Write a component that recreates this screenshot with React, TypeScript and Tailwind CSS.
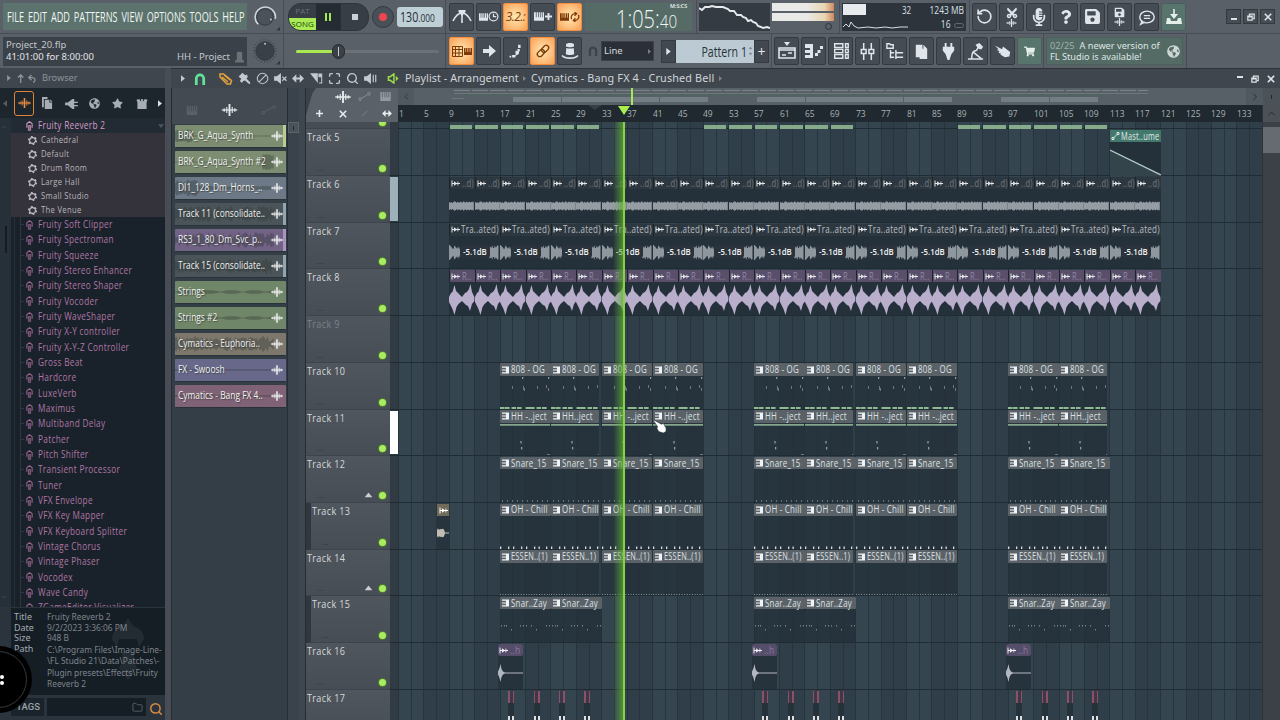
import type { ReactNode } from "react";
import clsx from "clsx";
import {
  FaCut,
  FaGlobeAmericas,
  FaMicrophoneAlt,
  FaQuestion,
  FaSave,
  FaShoppingCart,
  FaStar,
} from "react-icons/fa";
import {
  ChevronDown,
  ChevronLeft,
  ChevronRight,
  ChevronUp,
  Folder,
  Maximize,
  RotateCcw,
  Search,
} from "lucide-react";

const BAR = 6.351;
const barX = (bar: number) => 0.5 + (bar - 1) * BAR;

const range = (from: number, to: number, step: number) => {
  const out: number[] = [];
  for (let i = from; i < to; i += step) out.push(i);
  return out;
};

/* ---------- small shared pieces ---------- */

// Narrow UI lettering: regular glyphs squeezed horizontally.
function Cond({ children, className = "scale-x-[0.84]" }: { children: ReactNode; className?: string }) {
  return <span className={clsx("inline-block origin-left whitespace-pre", className)}>{children}</span>;
}

function Wave({ className }: { className?: string }) {
  return (
    <svg viewBox="0 0 18 14" className={className} fill="none" stroke="currentColor">
      <path strokeWidth="1.500" d="M0 7h18" />
      <path strokeWidth="1.300" d="M2.800 5v4M15.200 5v4M5.800 3.500v7M12.200 3.500v7" />
      <path strokeWidth="2.200" d="M9 0v14" />
    </svg>
  );
}

function Keys({ className }: { className?: string }) {
  return (
    <svg viewBox="0 0 14 12" className={className} fill="currentColor">
      <path d="M0 0h2.600v7h1V0h2.100v7h1V0h1.600v7h1V0H11v7h1V0h2v12H0z" />
    </svg>
  );
}

function Tri({ className }: { className?: string }) {
  return (
    <svg viewBox="0 0 5 8" className={clsx("shrink-0", className ?? "h-[7px] w-[5px]")} fill="currentColor">
      <path d="M0 0l5 4-5 4z" />
    </svg>
  );
}

function DoubleArrow({ className }: { className?: string }) {
  return (
    <svg viewBox="0 0 14 10" className={className} fill="currentColor">
      <path d="M0 5l5-5v3.800h4V0l5 5-5 5V6.200H5V10z" />
    </svg>
  );
}

function Speaker({ mute, className }: { mute?: boolean; className?: string }) {
  return (
    <svg viewBox="0 0 14 12" className={className} fill="currentColor" stroke="currentColor">
      <path stroke="none" d="M0 3.500h3L7.500 0v12L3 8.500H0z" />
      {mute ? (
        <path strokeWidth="1.400" d="M9 4l4.500 4.500M13.500 4L9 8.500" />
      ) : (
        <path strokeWidth="1.300" d="M10 2v8M12.700 2v8" />
      )}
    </svg>
  );
}

function Magnet({ className }: { className?: string }) {
  return (
    <svg viewBox="0 0 12 13" className={className} fill="none" stroke="currentColor" strokeWidth="3">
      <path d="M2 13V6a4 4 0 0 1 8 0v7" />
    </svg>
  );
}

function Restore({ className }: { className?: string }) {
  return (
    <svg viewBox="0 0 10 10" className={className} fill="none" stroke="currentColor" strokeWidth="1.500">
      <path d="M1 4h5.500v5H1zM3 3V1.500h6V7H7.500M1 4.800h5.500" />
    </svg>
  );
}

function Cross({ className }: { className?: string }) {
  return (
    <svg viewBox="0 0 10 10" className={className} fill="none" stroke="currentColor" strokeWidth="2">
      <path d="M1 1l8 8M9 1L1 9" />
    </svg>
  );
}

function ToolButton({ tone = "dark", children }: { tone?: "dark" | "hot" | "teal"; children: ReactNode }) {
  return (
    <button
      type="button"
      className={clsx(
        "flex h-[28px] w-[25px] shrink-0 items-center justify-center rounded-[2px] border",
        tone === "dark" && "border-[#343a41] bg-[#454c54] text-[#dfe5ea]",
        tone === "hot" && "border-[#f58d3a] bg-radial from-[#ffe9b4] to-[#f9a052] text-[#7c3a08]",
        tone === "teal" && "border-[#4a5f5c] bg-[#58756d] text-[#e6eeea]",
      )}
    >
      {children}
    </button>
  );
}

const Sep = () => <div className="h-full w-px shrink-0 bg-[#474d54]" />;

function Svg({ d, fill, w = 20 }: { d?: string; fill?: string; w?: number }) {
  return (
    <svg viewBox="0 0 20 20" width={w} height={w} fill="none" stroke="currentColor" strokeWidth="1.600">
      {d && <path d={d} />}
      {fill && <path d={fill} fill="currentColor" stroke="none" />}
    </svg>
  );
}

/* ---------- top toolbar ---------- */

function Knob({ dim }: { dim?: boolean }) {
  return (
    <svg viewBox="0 0 34 34" className="h-[34px] w-[33px]" fill="none">
      {!dim && <path d="M8.500 24.500A10.400 10.400 0 1 1 26 19" stroke="#cfd5d9" strokeWidth="1.600" />}
      {dim && <circle cx="15.500" cy="17" r="11.500" stroke="#3c4248" strokeWidth="1.200" strokeDasharray="1 2" />}
      <circle cx="15.500" cy="17" r={dim ? 9.5 : 8.5} fill={dim ? "#3a4047" : "#4b525a"} stroke="#32383e" />
      <circle cx={dim ? 15.5 : 21.5} cy={dim ? 9.5 : 19.5} r="1" fill="#bfc6cb" />
      <path d="M31 27v4h-4z" fill="#30363b" />
    </svg>
  );
}

function TopRow() {
  return (
    <div className="flex h-[34px] items-center border-b border-[#474d54]">
      <nav className="ml-[3px] flex h-[27px] w-[244px] shrink-0 items-center bg-[#5b736c] pl-[4px] font-['Open_Sans'] text-[14.500px] text-[#f1f5f3]">
        <div className="flex w-[378px] shrink-0 origin-left scale-x-[0.628] justify-between whitespace-nowrap">
          <span>FILE</span>
          <span>EDIT</span>
          <span>ADD</span>
          <span>PATTERNS</span>
          <span>VIEW</span>
          <span>OPTIONS</span>
          <span>TOOLS</span>
          <span>HELP</span>
        </div>
      </nav>
      <div className="ml-[3px] w-[33px] shrink-0">
        <Knob />
      </div>
      <Sep />
      <div className="ml-[4px] flex h-[28px] w-[81px] shrink-0 overflow-hidden rounded-[13px] border border-[#2e343a] bg-[#383e46]">
        <div className="flex w-[27px] flex-col text-center font-['Open_Sans'] text-[8px] leading-[14px]">
          <span className="text-[#6b727a]">PAT</span>
          <span className="h-[13px] rounded-bl-[9px] bg-[#a9ec56] leading-[12px] text-[#24400d]">SONG</span>
        </div>
        <div className="flex w-[25px] items-center justify-center gap-[2px] border-r border-[#2b3036] bg-[#252b32]">
          <span className="h-[8px] w-[2px] bg-[#a4e84d]" />
          <span className="h-[8px] w-[2px] bg-[#a4e84d]" />
        </div>
        <div className="flex flex-1 items-center justify-center">
          <span className="size-[6px] bg-[#cbd0d5]" />
        </div>
      </div>
      <div className="ml-[3px] flex size-[22px] shrink-0 items-center justify-center rounded-full border border-[#343a40] bg-[#4a5058]">
        <span className="size-[8px] rounded-full bg-[#ee4550]" />
      </div>
      <div className="ml-[3px] flex h-[20px] w-[46px] shrink-0 items-center rounded-[3px] bg-[#bfcfd6] pl-[3px] font-['Open_Sans'] text-[#27323a]">
        <Cond className="w-[38px] scale-x-[0.76] text-[14px]">
          130<span className="text-[11px]">.000</span>
        </Cond>
      </div>
      <div className="ml-[2px] h-full">
        <Sep />
      </div>
      <div className="ml-[3px] flex gap-[2px]">
        <ToolButton>
          <Svg d="M1 14C4 8 7 6 10 6s6 2 9 8M10 3v13" fill="M6.500 3h7v2L10 9 6.500 5z" />
        </ToolButton>
        <ToolButton>
          <div className="flex items-center">
            <Keys className="h-[8px] w-[9px]" />
            <svg viewBox="0 0 12 12" className="size-[11px]" fill="none" stroke="currentColor" strokeWidth="1.300">
              <circle cx="6" cy="6" r="4.800" />
              <path d="M6 3v3.200h3" />
            </svg>
          </div>
        </ToolButton>
        <ToolButton tone="hot">
          <span className="font-['Open_Sans'] text-[12px] tracking-tighter italic">3.2.:</span>
        </ToolButton>
        <ToolButton>
          <div className="flex items-center gap-px">
            <Keys className="h-[9px] w-[10px]" />
            <svg viewBox="0 0 8 8" className="size-[7px]" stroke="currentColor" strokeWidth="2.200">
              <path d="M4 0v8M0 4h8" />
            </svg>
          </div>
        </ToolButton>
        <ToolButton tone="hot">
          <div className="flex items-center gap-px">
            <Keys className="h-[8px] w-[9px]" />
            <svg viewBox="0 0 12 12" className="size-[10px]" fill="none" stroke="currentColor" strokeWidth="1.500">
              <path d="M2 8.500A4.500 4.500 0 0 1 7 2M5.500 0L8 2 5.500 4.500M10 3.500A4.500 4.500 0 0 1 5 10M6.500 7.500L4 10l2.500 2" />
            </svg>
          </div>
        </ToolButton>
      </div>
      <div className="ml-[3px] flex h-[28px] w-[107px] shrink-0 bg-[#566b66] pl-[31px] font-['Open_Sans'] text-[#eff6f3]">
        <Cond className="mt-[6px] h-[19px] w-[53px] shrink-0 scale-x-[0.8] text-[25px] leading-[19px] font-light">
          1:05:<span className="text-[19px]">40</span>
        </Cond>
        <span className="-ml-px origin-right scale-x-90 text-[6px] leading-[6px] font-semibold">M:S:CS</span>
      </div>
      <div className="ml-[4px] h-full">
        <Sep />
      </div>
      <div className="ml-[2px] h-[28px] w-[71px] shrink-0 bg-[#343b43]">
        <svg viewBox="0 0 71 28" className="h-full w-full" fill="none" stroke="#e6eaed" strokeWidth="1.900">
          <path d="M0 5l3 2 3-3 4 0 3-1 4 1 3 0 4 0 5 2 2 2 4 0 3 4 4 0 2 2 3 1 2 3 3-1 2 2 3 1 2 3 3 1 2 1 4-1 3 1 2 1" />
        </svg>
      </div>
      <div className="ml-[2px] flex h-[28px] w-[62px] shrink-0 flex-col gap-[2px]">
        <span className="h-[8px] bg-linear-to-r from-[#e9e9e8] from-55% via-[#e8d6b0] via-85% to-[#cd8863]" />
        <span className="h-[8px] bg-linear-to-r from-[#e9e9e8] from-55% via-[#e8d6b0] via-85% to-[#cd8863]" />
        <span className="mr-[2px] size-[7px] self-end rounded-full border border-[#2d3338]" />
      </div>
      <div className="ml-[5px] h-full">
        <Sep />
      </div>
      <div className="relative ml-[2px] flex h-[28px] w-[124px] shrink-0 bg-[#2d343c] font-['Open_Sans'] text-[10px] leading-[14px] text-[#dce1e5]">
        <div className="w-[74px]">
          <div className="flex h-[14px] items-center">
            <span className="ml-px h-[11px] w-[23px] bg-[#e7ebee]" />
            <Cond className="ml-[36px] scale-x-[0.8]">32</Cond>
          </div>
          <svg viewBox="0 0 66 14" className="h-[14px] w-[66px]" fill="none" stroke="#d9dee2" strokeWidth="1">
            <path d="M1 10l3-3 3 3 2-5 3 4 4 2 10-1 8 1 9-1 7 1 8-1 8 0" />
          </svg>
        </div>
        <div className="flex flex-1 flex-col items-end pr-[2px]">
          <span className="origin-right scale-x-[0.84]">1243 MB</span>
          <span className="mr-[14px] origin-right scale-x-[0.84]">16</span>
        </div>
        <span className="absolute right-[2px] bottom-[3px] h-[5px] w-[10px] rounded-full border-[1.500px] border-[#636a70]" />
      </div>
      <div className="ml-[3px] h-full">
        <Sep />
      </div>
      <div className="ml-[2px] flex gap-[2px]">
        <ToolButton>
          <RotateCcw className="size-[17px]" strokeWidth={2.300} />
        </ToolButton>
        <ToolButton>
          <div className="flex flex-col items-center">
            <FaCut className="size-[12px] -rotate-90" />
            <Wave className="h-[8px] w-[11px]" />
          </div>
        </ToolButton>
        <ToolButton>
          <FaMicrophoneAlt className="size-[18px]" />
        </ToolButton>
        <ToolButton>
          <FaQuestion className="size-[14px]" />
        </ToolButton>
        <ToolButton>
          <FaSave className="size-[17px]" />
        </ToolButton>
        <ToolButton>
          <div className="flex flex-col items-center">
            <FaSave className="size-[11px]" />
            <Wave className="h-[8px] w-[11px]" />
          </div>
        </ToolButton>
        <ToolButton>
          <Svg
            d="M6 15.500C3.500 14.500 2 12.500 2 10c0-3.700 3.600-6.500 8-6.500s8 2.800 8 6.500-3.600 6.500-8 6.500c-1 0-2 0-3-.5l-4 2 1.500-3.500M6.500 8.500h7M6.500 11.500h7"
            w={18}
          />
        </ToolButton>
        <ToolButton tone="teal">
          <Svg d="M10 2v6" fill="M6 7h8l-4 5zM3 11h3l1 3h6l1-3h3l1 6H2z" />
        </ToolButton>
      </div>
      <div className="ml-[40px] flex gap-[2px] text-[#dfe3e6]">
        <span className="flex h-[15px] w-[15px] items-center justify-center border border-[#33393f] bg-[#464d54]">
          <span className="mt-[5px] h-[2px] w-[6px] bg-current" />
        </span>
        <span className="flex h-[15px] w-[15px] items-center justify-center border border-[#33393f] bg-[#464d54]">
          <Restore className="size-[8px]" />
        </span>
        <span className="flex h-[15px] w-[15px] items-center justify-center border border-[#33393f] bg-[#464d54]">
          <Cross className="size-[8px]" />
        </span>
      </div>
    </div>
  );
}

function SecondRow() {
  return (
    <div className="flex h-[34px] items-center">
      <div className="ml-[3px] flex h-[29px] w-[244px] shrink-0 flex-col bg-[#3b4149] pl-[3px] font-['Noto_Sans'] text-[9.500px] leading-[12px] text-[#c3c8cc]">
        <span className="mt-[2px]">Project_20.flp</span>
        <div className="flex items-center justify-between pr-[3px]">
          <span className="text-[#e2e6e9]">41:01:00 for 8:00:00</span>
          <span className="flex items-center gap-[5px]">
            HH - Project
            <svg viewBox="0 0 10 12" className="h-[12px] w-[9px]" fill="#6a7177">
              <path d="M2 1c0-1.200 6-1.200 6 0v8l2 1v2H0v-2l2-1z" />
            </svg>
          </span>
        </div>
      </div>
      <div className="ml-[3px] w-[33px] shrink-0">
        <Knob dim />
      </div>
      <Sep />
      <div className="relative ml-[12px] h-[3px] w-[143px] shrink-0 rounded bg-[#6b7177]">
        <div className="h-[3px] w-[43px] rounded bg-[#a9e84f]" />
        <div className="absolute -top-[6px] left-[36px] flex h-[15px] w-[13px] items-center justify-center rounded-full border border-[#23282d] bg-[#3b4147]">
          <span className="h-[9px] w-px bg-[#c2c8cc]" />
        </div>
      </div>
      <div className="ml-[6px] h-full">
        <Sep />
      </div>
      <div className="ml-[3px] flex gap-[2px]">
        <ToolButton tone="hot">
          <div className="flex items-center gap-px">
            <svg viewBox="0 0 11 11" className="size-[11px]" fill="none" stroke="currentColor">
              <path d="M.5.500h10v10H.5zM3.500 0v11M7 0v11M0 3.500h11M0 7h11" />
            </svg>
            <Keys className="h-[11px] w-[8px]" />
          </div>
        </ToolButton>
        <ToolButton>
          <Svg fill="M4 8h6V4l7 6-7 6v-4H4z" />
        </ToolButton>
        <ToolButton>
          <Svg fill="M13 2h3v4h-3zM12 7h3v3h-2zM10 9h4v4l-4 2zM6 14h4v3H6zM3 15h2v2H3z" w={17} />
        </ToolButton>
        <ToolButton tone="hot">
          <svg viewBox="0 0 16 16" className="size-[16px]" fill="none" stroke="currentColor" strokeWidth="1.300">
            <g transform="rotate(-45 8 8)">
              <rect x="1" y="5.500" width="8" height="5" rx="2.500" />
              <rect x="7" y="5.500" width="8" height="5" rx="2.500" />
            </g>
          </svg>
        </ToolButton>
        <ToolButton>
          <Svg
            d="M2 14.500c3 3.500 13 3.500 16 0"
            fill="M6 3.500c0-2 8-2 8 0V5.500c-2 1-6 1-8 0zM6.300 7c2 .8 5.400.8 7.400 0l.5 6c-2 1.300-6.400 1.300-8.400 0z"
          />
        </ToolButton>
      </div>
      <div className="ml-[4px] flex w-[14px] shrink-0 justify-center">
        <Magnet className="h-[10px] w-[10px] text-[#3d444a]" />
      </div>
      <div className="ml-px flex h-[20px] w-[53px] shrink-0 items-center justify-between border border-[#3c424a] bg-[#2b3038] px-[2px] font-['Noto_Sans'] text-[9.500px] text-[#d6dade]">
        Line
        <Tri className="h-[5px] w-[3px] text-[#7a8086]" />
      </div>
      <div className="ml-[7px] flex h-[23px] w-[108px] shrink-0 bg-[#41484f] font-['Open_Sans']">
        <span className="flex w-[15px] items-center justify-center border border-[#353b41] text-[#e5e9ec]">
          <Tri />
        </span>
        <span className="flex w-[78px] items-center justify-end bg-[#bccbd3] text-[14px] text-[#27323a]">
          <span className="origin-right scale-x-[0.76]">Pattern 1</span>
          <span className="mx-[2px] flex flex-col gap-[2px] text-[#7b8990]">
            <Tri className="h-[4px] w-[3px] -rotate-90" />
            <Tri className="h-[4px] w-[3px] rotate-90" />
          </span>
        </span>
        <span className="flex w-[15px] items-center justify-center border border-[#353b41] text-[14px] text-[#e5e9ec]">+</span>
      </div>
      <div className="ml-[2px] h-full">
        <Sep />
      </div>
      <div className="ml-[2px] flex gap-[2px]">
        <ToolButton>
          <Svg d="M2 7h16v10H2zM2 9h16M5 14h4M11 12h4" fill="M7 1h6l-3 4z" />
        </ToolButton>
        <ToolButton>
          <Svg fill="M1 3h8v14H1v-3h5v-2H1V9h5V7H1zM11 12h3v3h-3zM13.500 9h3v3h-3zM16 5h3v3h-3z" />
        </ToolButton>
        <ToolButton>
          <Svg d="M3 2h9v4H3zM3 8h9v4H3zM3 14h9v4H3zM15 2h3v4h-3zM15 8h3v4h-3zM15 14h3v4h-3z" w={18} />
        </ToolButton>
        <ToolButton>
          <Svg d="M6 1v6M6 13v6M14 1v6M14 13v6M3.500 8h5v4h-5zM11.500 8h5v4h-5z" w={19} />
        </ToolButton>
        <ToolButton>
          <Svg d="M1 7V2h3l1 1h3v4zM5 9v9M5 12h4M5 17h4M11 9v6M11 12h8M11 15v4M11 17h8" w={18} />
        </ToolButton>
        <ToolButton>
          <Svg fill="M4 3h7v4h5v11H8v-2H4zM12 3l4 4h-4z" w={19} />
        </ToolButton>
        <ToolButton>
          <Svg fill="M6 1h2v4h4V1h2v4h2v4l-3 4-2 6H9l-2-6-3-4V5h2z" w={19} />
        </ToolButton>
        <ToolButton>
          <Svg d="M2 18h16M6 17c0-5 2-8 5-8M8 11l8 6.500M11 9l2-4" fill="M10 3l4-2 4 4-2 3-3-1z" w={19} />
        </ToolButton>
        <ToolButton>
          <Svg fill="M1 4l8 4 1-3 8 6-1 5-5 1-5-3 1-1-3-1 1-2-3-1 2-1z" w={18} />
        </ToolButton>
        <ToolButton tone="teal">
          <FaShoppingCart className="size-[11px]" />
        </ToolButton>
      </div>
      <div className="ml-[1px] h-full">
        <Sep />
      </div>
      <div className="ml-[2px] flex h-[28px] w-[137px] shrink-0 items-center justify-between border border-[#4b5f5b] bg-[#536a65] pr-[2px] pl-[3px] font-['Noto_Sans'] text-[9.200px] leading-[11.500px] text-[#dfe7e4]">
        <p className="whitespace-nowrap">
          <span className="mr-[5px] text-[#9fb0ab]">02/25</span>A newer version of
          <br />
          FL Studio is available!
        </p>
        <FaGlobeAmericas className="size-[13px] shrink-0 text-[#cdd6d3]" />
      </div>
      <div className="ml-[3px] h-full">
        <Sep />
      </div>
    </div>
  );
}

/* ---------- browser ---------- */

const presets = ["Cathedral", "Default", "Drum Room", "Large Hall", "Small Studio", "The Venue"];

const plugins = [
  "Fruity Soft Clipper",
  "Fruity Spectroman",
  "Fruity Squeeze",
  "Fruity Stereo Enhancer",
  "Fruity Stereo Shaper",
  "Fruity Vocoder",
  "Fruity WaveShaper",
  "Fruity X-Y controller",
  "Fruity X-Y-Z Controller",
  "Gross Beat",
  "Hardcore",
  "LuxeVerb",
  "Maximus",
  "Multiband Delay",
  "Patcher",
  "Pitch Shifter",
  "Transient Processor",
  "Tuner",
  "VFX Envelope",
  "VFX Key Mapper",
  "VFX Keyboard Splitter",
  "Vintage Chorus",
  "Vintage Phaser",
  "Vocodex",
  "Wave Candy",
  "ZGameEditor Visualizer",
];

function PluginIcon() {
  return (
    <svg viewBox="0 0 8 11" className="h-[10px] w-[7px] shrink-0" fill="none" stroke="currentColor" strokeWidth="1.200">
      <path d="M1 7.500V3l1.500-1.500h3L7 3v4.500M3 .6h2" />
      <path d="M2.700 5h2.600v5.500H2.700z" fill="currentColor" fillOpacity="0.5" strokeWidth="0.800" />
    </svg>
  );
}

function Gear() {
  return (
    <svg viewBox="0 0 10 10" className="size-[9px] shrink-0" fill="none" stroke="#c3c0c6">
      <circle cx="5" cy="5" r="3.200" strokeWidth="1.200" />
      <circle cx="5" cy="5" r="4.300" strokeWidth="1.500" strokeDasharray="2 2.500" />
    </svg>
  );
}

function Browser() {
  return (
    <aside className="flex w-[165px] shrink-0 flex-col font-['Open_Sans']">
      <div className="flex h-[20px] items-center gap-[6px] bg-[#40464d] pl-[7px] text-[#8d9398]">
        <Tri className="h-[6px] w-[4px]" />
        <svg viewBox="0 0 22 10" className="h-[9px] w-[20px]" fill="none" stroke="currentColor" strokeWidth="1.500">
          <path d="M4 10V1M1 4l3-3 3 3M18 9.500c3-2 2-5.500-1-5.500h-4M16 1l-3 3 3 3" />
        </svg>
        <span className="-ml-px font-['Noto_Sans'] text-[9.200px]">Browser</span>
      </div>
      <div className="flex h-[30px] items-center bg-[#1d262d] text-[#a7adb2]">
        <Tri className="ml-[3px] h-[7px] w-[4px] rotate-180 text-[#555d63]" />
        <span className="ml-[7px] flex h-[25px] w-[20px] items-center justify-center rounded-[3px] border border-[#e0843c] text-[#ec8f44]">
          <Wave className="h-[10px] w-[13px]" />
        </span>
        <div className="flex flex-1 items-center justify-between pr-[3px] pl-[8px]">
          <svg viewBox="0 0 12 13" className="h-[12px] w-[11px]" fill="currentColor">
            <path d="M0 0h6v2H2v9H0zM3 3h5v3h3v7H3zM9 2.500L11.500 5H9z" />
          </svg>
          <svg viewBox="0 0 14 12" className="ml-[2px] h-[11px] w-[13px]" fill="currentColor">
            <path d="M0 5h3l5-4h2v3h4v1.500h-4v2h4V9h-4v3H8L3 8H0z" />
          </svg>
          <FaGlobeAmericas className="size-[11px]" />
          <FaStar className="ml-[2px] size-[11px]" />
          <svg viewBox="0 0 12 12" className="ml-[2px] h-[11px] w-[12px]" fill="currentColor">
            <path d="M0 2l3-1 2 3V1h2v3l2-3 3 1-1 3v7H1V5z" />
          </svg>
          <Tri className="h-[7px] w-[4px] text-[#dadfe2]" />
        </div>
      </div>
      <div className="flex h-[489px]">
        <div className="relative flex w-[11px] flex-col justify-between bg-[#263038] pt-[5px] pb-[6px] text-[#47525a]">
          <ChevronUp className="size-[8px]" />
          <ChevronDown className="size-[8px]" />
          <span className="absolute top-[108px] left-[5px] h-[27px] w-[2px] bg-[#141b21]" />
        </div>
        <div className="flex-1 overflow-hidden bg-[#19222a]">
          <div className="flex h-[15px] items-center bg-[#222b33] pr-[2px] pl-[15px] text-[10px] font-medium text-[#d59bcb]">
            <PluginIcon />
            <Cond className="ml-[5px] scale-x-[0.82] tracking-[0.4px]">Fruity Reeverb 2</Cond>
            <Tri className="ml-auto h-[6px] w-[4px] rotate-90 text-[#4d565d]" />
          </div>
          <div className="bg-[#34323a] text-[9.800px] text-[#b8b6bd]">
            {presets.map((p) => (
              <div key={p} className="flex h-[14px] items-center pl-[17px]">
                <Gear />
                <Cond className="ml-[4px] scale-x-[0.78] tracking-[0.4px]">{p}</Cond>
              </div>
            ))}
          </div>
          <div className="ml-[3px] border-l border-[#252f37] text-[10px] font-medium text-[#b076a6]">
            <div className="ml-[5px] border-l border-[#2e3740]">
              {plugins.map((p) => (
                <div key={p} className="flex h-[15.340px] items-center">
                  <span className="h-px w-[3px] bg-[#2e3740]" />
                  <span className="ml-[2px] text-[#9a6591]">
                    <PluginIcon />
                  </span>
                  <Cond className="ml-[5px] scale-x-[0.82] tracking-[0.4px]">{p}</Cond>
                </div>
              ))}
            </div>
          </div>
        </div>
      </div>
      <div className="flex flex-1 flex-col bg-[#2b343c] pl-[11px]">
        <div className="relative mt-px h-[87px] bg-[#151d25] pt-[4px] pl-[3px] font-['Noto_Sans'] text-[9px] leading-[10.700px] text-[#7e858c]">
          <svg viewBox="0 0 40 62" className="absolute top-[10px] left-[97px] h-[62px] w-[40px]" fill="#232b33">
            <path d="M20 0l5 8c7 2 11 7 11 13l-5 8-2-8H11l-2 8-5-8C4 15 8 10 15 8zM14 34h12v10l3 6-9 12-9-12 3-6z" />
          </svg>
          <div className="relative flex whitespace-nowrap">
            <div className="flex w-[33px] shrink-0 flex-col text-[#a5abb1]">
              <span>Title</span>
              <span>Date</span>
              <span>Size</span>
              <span>Path</span>
            </div>
            <div className="flex w-[118px] shrink-0 origin-left scale-x-[0.93] flex-col">
              <span>Fruity Reeverb 2</span>
              <span>9/2/2023 3:36:06 PM</span>
              <span>948 B</span>
              <span className="leading-[11.300px]">
                C:\Program Files\Image-Line-
                <br />
                \FL Studio 21\Data\Patches\-
                <br />
                Plugin presets\Effects\Fruity
                <br />
                Reeverb 2
              </span>
            </div>
          </div>
        </div>
        <div className="mt-[3px] flex h-[18px] items-center">
          <span className="flex h-full w-[33px] items-center justify-end bg-[#1a232b] pr-[4px] font-['Roboto'] text-[9.500px] font-medium text-[#9ba2a8]">
            TAGS
          </span>
          <span className="ml-[3px] flex h-full w-[99px] items-center justify-end bg-[#151d25] pr-[3px] text-[#5b636a]">
            <Folder className="size-[11px]" />
          </span>
          <Search className="mt-[3px] ml-[3px] size-[14px] text-[#dc8a45]" strokeWidth={2.500} />
        </div>
      </div>
    </aside>
  );
}

/* ---------- clip picker ---------- */

const pickerClips = [
  { name: "BRK_G_Aqua_Synth", tone: "bg-[#7d8d71]", edge: "bg-[#b9cc91]" },
  { name: "BRK_G_Aqua_Synth #2", tone: "bg-[#7d8d71]", edge: "" },
  { name: "DI1_128_Dm_Horns_..", tone: "bg-[#6d7987]", edge: "" },
  { name: "Track 11 (consolidate..", tone: "bg-[#4b5459]", edge: "bg-[#91a5ac]" },
  { name: "RS3_1_80_Dm_Svc_p..", tone: "bg-[#716286]", edge: "bg-[#a893c1]" },
  { name: "Track 15 (consolidate..", tone: "bg-[#4b5459]", edge: "bg-[#91a5ac]" },
  { name: "Strings", tone: "bg-[#708668]", edge: "" },
  { name: "Strings #2", tone: "bg-[#708668]", edge: "" },
  { name: "Cymatics - Euphoria..", tone: "bg-[#7e776c]", edge: "" },
  { name: "FX - Swoosh", tone: "bg-[#68688a]", edge: "" },
  { name: "Cymatics - Bang FX 4..", tone: "bg-[#7f6275]", edge: "" },
];

// Filled envelope mirrored round the middle line.
function envelope(width: number, mid: number, step: number, amp: (x: number) => number) {
  const xs = range(0, width + 0.01, step);
  const top = xs.map((x) => `${x.toFixed(1)} ${(mid - amp(x)).toFixed(1)}`);
  const bottom = xs.map((x) => `${x.toFixed(1)} ${(mid + amp(x)).toFixed(1)}`).reverse();
  return `M${top.join("L")}L${bottom.join("L")}Z`;
}

const noise = (n: number) => Math.abs(Math.sin(n * 12.9898) * 43758.5453) % 1;

function Picker() {
  return (
    <section className="flex w-[128px] shrink-0 border-l border-[#252d34] bg-[#343e47]">
      <div className="w-[116px]">
        <div className="flex h-[36px] items-center justify-around bg-[#434a52] pt-[8px] pl-[2px] text-[#5a6168]">
          <Keys className="h-[9px] w-[12px]" />
          <Wave className="h-[12px] w-[17px] text-[#e3e8eb]" />
          <svg viewBox="0 0 16 10" className="h-[10px] w-[15px]" fill="none" stroke="currentColor">
            <circle cx="2" cy="8" r="1.500" />
            <path d="M3.500 7l9-5" />
            <circle cx="14" cy="2" r="1.500" />
          </svg>
        </div>
        <div className="flex flex-col gap-[3px] pt-px pl-[3px]">
          {pickerClips.map((clip, i) => (
            <div
              key={clip.name}
              className={clsx(
                "relative flex h-[23px] w-[111px] items-center rounded-[1px] border-b border-[#2a3239] pr-[3px] pl-[3px] font-['Open_Sans'] text-[10.500px] text-[#f0f2f0]",
                clip.tone,
              )}
            >
              <svg viewBox="0 0 108 20" className="absolute inset-0 h-full w-full" fill="#2f3a38" fillOpacity="0.38">
                <path
                  d={envelope(96, 10, 1.5, (x) => {
                    if (i === 0) return x < 18 ? 4 + noise(x) * 3 : 0.4;
                    if (i === 1) return x > 84 ? 5 + noise(x) * 3 : 0.6;
                    if (i === 2) return x < 24 ? 4 + noise(x) * 5 : 1 + noise(x);
                    if (i === 6 || i === 7) return Math.abs(Math.sin(x / 7)) * 1.5 + 0.3;
                    if (i > 8) return 0.7;
                    return 2 + noise(x + i) * 6;
                  })}
                />
              </svg>
              <Cond className="relative scale-x-[0.8] font-medium [text-shadow:1px_1px_1px_#333a]">{clip.name}</Cond>
              <Wave className="absolute right-[3px] h-[10px] w-[12px] text-[#f4f6f6]" />
              {clip.edge && <span className={clsx("absolute inset-y-0 right-0 w-[3px]", clip.edge)} />}
            </div>
          ))}
        </div>
      </div>
      <div className="w-[12px] border-l border-[#262e35] bg-[#3a434c] pt-[34px]">
        <div className="flex h-[11px] items-center justify-center border border-[#5a626a] bg-[#4a525a]">
          <span className="h-[4px] w-px bg-[#20272d]" />
        </div>
      </div>
    </section>
  );
}

/* ---------- playlist ---------- */

const toolCell = "flex shrink-0 w-[18px] justify-center";

function TitleBar() {
  return (
    <div className="flex h-[20px] items-center border-t border-[#2c3238] bg-[#40464d] text-[#c3c9ce]">
      <Tri className="ml-[10px] h-[7px] w-[4px]" />
      <Magnet className="ml-[9px] h-[12px] w-[12px] text-[#5fe39a]" />
      <div className="ml-[11px] flex items-center">
        <span className={toolCell}>
          <svg viewBox="0 0 14 12" className="h-[12px] w-[14px]" fill="none" stroke="#e2a33c" strokeWidth="1.500">
            <path d="M1 1l3.500 0 8 6.500-1 3.500-3.500 0L1 4zM3 4l6 5M5 2l6 5" />
          </svg>
        </span>
        <span className={toolCell}>
          <Svg fill="M1 7l6-6 4 4 3-1 1 4-2 2 6 6-1 3-3-2-4-4-3 1-2 3-3-3 2-4-2-1z" w={13} />
        </span>
        <span className={toolCell}>
          <Svg d="M10 2a8 8 0 1 0 .1 0M4.500 15.500l11-11" w={13} />
        </span>
        <span className={toolCell}>
          <Speaker mute className="h-[11px] w-[13px]" />
        </span>
        <span className={toolCell}>
          <DoubleArrow className="h-[9px] w-[12px]" />
        </span>
        <span className={toolCell}>
          <Svg d="M13 3h5v14h-4" fill="M0 2h12v15zM13 3h5v5h-5z" w={13} />
        </span>
        <span className={toolCell}>
          <Maximize className="size-[13px]" strokeWidth={2.500} />
        </span>
        <span className={toolCell}>
          <Search className="size-[13px]" strokeWidth={2.600} />
        </span>
        <span className={toolCell}>
          <Speaker className="h-[11px] w-[13px]" />
        </span>
      </div>
      <svg viewBox="0 0 12 12" className="ml-[8px] h-[11px] w-[12px]" fill="none" stroke="#9ddc48" strokeWidth="1.600">
        <path d="M1 4h2l4-3v10L3 8H1z" />
        <path d="M9 3l3 3-3 3z" fill="#9ddc48" stroke="none" />
      </svg>
      <div className="ml-[6px] flex items-center gap-[4px] font-['Noto_Sans'] text-[10.800px] whitespace-nowrap text-[#d0d5d9]">
        <span className="w-[114px] tracking-[0.060px]">Playlist - Arrangement</span>
        <Tri className="h-[5px] w-[3px] text-[#7d848a]" />
        <span className="ml-px w-[184px] tracking-[0.160px]">Cymatics - Bang FX 4 - Crushed Bell</span>
        <Tri className="h-[5px] w-[3px] text-[#7d848a]" />
      </div>
      <div className="mr-[5px] ml-auto flex items-center gap-[8px] text-[#dfe3e6]">
        <span className="mb-[3px] h-[2px] w-[6px] bg-current" />
        <Restore className="size-[8px]" />
        <Cross className="size-[8px]" />
      </div>
    </div>
  );
}

type Track = { n: number; dim?: boolean; child?: boolean; parent?: boolean; meter?: string };

const tracks: Track[] = [
  { n: 5 },
  { n: 6, meter: "bg-[#9db1ba]" },
  { n: 7 },
  { n: 8 },
  { n: 9, dim: true },
  { n: 10 },
  { n: 11, meter: "bg-white" },
  { n: 12, parent: true },
  { n: 13, child: true },
  { n: 14, parent: true },
  { n: 15, child: true },
  { n: 16 },
  { n: 17 },
];

const Led = () => <span className="size-[7px] rounded-full bg-[#a9ec62] ring-1 ring-[#4c7c2c]" />;

function TrackHeader({ track }: { track: Track }) {
  return (
    <div className="flex h-[46.720px] shrink-0">
      <div
        className={clsx(
          "relative w-[84px] rounded-br-[3px] border-b border-[#3d444b] bg-linear-to-b from-[#50565d] to-[#474d54] font-['Open_Sans'] text-[10.500px] leading-[16px]",
          track.child && "border-l-[5px] border-l-[#30373e]",
          track.dim ? "text-[#7c8389]" : "text-[#d5d9dc]",
        )}
      >
        <Cond className="ml-px scale-x-[0.86] tracking-[0.4px]">Track {track.n}</Cond>
        <span className="absolute bottom-[4px] left-[11px] text-[8px] leading-[6px] text-[#2d3339]">...</span>
        <div className="absolute right-[4px] bottom-[3px] flex items-center gap-[8px]">
          {track.parent && <Tri className="h-[8px] w-[5px] -rotate-90 text-[#c9ced2]" />}
          <Led />
        </div>
      </div>
      <div className="w-[8px] border-b border-[#1f292f] bg-[#303b43] py-px">
        {track.meter && <div className={clsx("h-full w-full", track.meter)} />}
      </div>
    </div>
  );
}

const patternBars = [17, 25, 33, 41, 57, 65, 73, 81, 97, 105];
const shortBars = [25, 65, 105];

const AudioMark = ({ className }: { className?: string }) => (
  <svg viewBox="0 0 9 7" className={clsx("h-[7px] w-[9px] shrink-0", className)} fill="currentColor">
    <path d="M.5.500h1v2.500h1.500V1.200L5.500 3h1V1.500h.8V3H9v1H7.300v1.500h-.8V4h-1L3 5.800V4H1.500v2.500h-1z" />
  </svg>
);

function PatternClip({ bar, label, row }: { bar: number; label: string; row: number }) {
  const short = shortBars.includes(bar) && row !== 12 && row !== 15;
  const w = short ? 48 : 50.3;
  return (
    <div
      className="absolute top-[0.500px] bottom-0 overflow-hidden bg-[#24313a]/80"
      style={{ left: barX(bar) + 0.3, width: w }}
    >
      <div className="flex h-[12.500px] items-center rounded-[1px] bg-[#5a6268] pl-[2px] font-['Open_Sans'] text-[10px] text-[#dde1e4]">
        <svg viewBox="0 0 8 8" className="h-[8px] w-[7px] shrink-0" fill="#f0f3f5">
          <path d="M0 0h8v8H0V6.600h4.500V4.700H0V3.300h4.500V1.400H0z" />
        </svg>
        <Cond className={clsx("ml-[2px] tracking-[0.3px]", row === 14 ? "scale-x-[0.74]" : "scale-x-[0.79]")}>
          {label}
        </Cond>
      </div>
      <svg viewBox="0 0 50 34" className="h-[34px] w-[50px]" fill="#aeb9bd">
        {row === 10 && (
          <>
            <path
              opacity="0.75"
              d="M22 1h1.300v2H22zM48 1h1.300v2H48zM12 10h.7v3H12zM23 10h.7v4H23zM24 12h.7v3H24zM37 10h.7v3H37zM46 9h.7v3H46zM48 12h.7v3H48z"
            />
            <path
              fill="#8fbb93"
              d={[0, 5, 11.5, 17, 25.5, 30, 36.5, 42].map((x) => `M${x} 31h4.600v2.500h-4.600z`).join("")}
            />
          </>
        )}
        {row === 11 && (
          <>
            <path fill="#86a58d" d="M0 1h50v1.700H0z" />
            <path d="M20.500 18h1v2.500h-1zM21.200 24h1v2.500h-1zM47 31.500h3V33h-3z" />
          </>
        )}
        {row === 12 && <path opacity="0.6" d={range(2, 50, 5).map((x) => `M${x} 31h.8v2h-.8z`).join("")} />}
        {row === 13 && (
          <path
            fill="#d9dedd"
            d={[0, 8, 13, 21, 26, 34, 38.5, 46].map((x) => `M${x} 30.500h1.300v2.500h-1.300z`).join("")}
          />
        )}
        {row === 14 && <path opacity="0.8" d={range(0, 50, 2.6).map((x) => `M${x} 31h.9v1.700h-.9z`).join("")} />}
        {row === 15 && (
          <path
            opacity="0.6"
            d="M1 16h1v1.500H1zM4 16h1v1.500H4zM6 16h1v1.500H6zM11 20h1v1.500h-1zM20 16h1v1.500h-1zM23 16h1v1.500h-1zM26 16h1v1.500h-1zM31 16h1v1.500h-1zM36 20h1v1.500h-1zM46 16h1v1.500h-1zM49 16h1v1.500h-1z"
          />
        )}
      </svg>
    </div>
  );
}

const patternNames: Record<number, (bar: number) => string> = {
  10: () => "808 - OG",
  11: (bar) => (shortBars.includes(bar) ? "HH..ject" : "HH -..ject"),
  12: () => "Snare_15",
  13: () => "OH - Chill",
  14: (bar) => (shortBars.includes(bar) ? "ESSEN..1)" : "ESSEN..(1)"),
  15: () => "Snar..Zay",
};

function AudioClip({ bar, bars, row }: { bar: number; bars: number; row: number }) {
  const w = bars * BAR;
  const tone = {
    6: "bg-[#2d373f] text-[#737b82]",
    7: "bg-[#2d373f] text-[#b9bfc4]",
    8: "bg-[#594f6b] text-[#8f86a0]",
  }[row];
  return (
    <div
      className="absolute top-px bottom-0 overflow-hidden bg-[#25313a]"
      style={{ left: barX(bar), width: w }}
    >
      <div
        className={clsx(
          "flex h-[12px] items-center border-l border-[#1a2429] pl-[1px] font-['Open_Sans'] text-[10px]",
          tone,
        )}
      >
        <AudioMark className="text-[#e2e5e8]" />
        <Cond className={clsx("tracking-[0.3px]", row === 7 ? "ml-[1px] scale-x-[0.8]" : "ml-[2px] scale-x-[0.76]")}>
          {row === 7 ? "Tra..ated)" : row === 6 ? "..d)" : "R.."}
        </Cond>
      </div>
      <svg viewBox={`0 0 ${w} 34`} className="block h-[34px] w-full" preserveAspectRatio="none">
        {row === 6 && <path fill="#959ca3" d={envelope(w - 0.6, 17, 0.8, (x) => 3 + noise(x + 3) * 1.8)} />}
        {row === 7 && (
          <path fill="#8f979e" d={envelope(w - 0.6, 16.5, 0.9, (x) => (x > 10 && x < 40 ? 3 : 3.5 + noise(x + 1) * 4))} />
        )}
        {row === 8 && (
          <path
            fill="#b9aecb"
            d="M0 15l2-4 1.500-1L5.500 3l1.500 6 2 2 4 4 3-4 2-1 2-3L21.500 2l1.500 8 2.400 5v4l-2.400 3-2 7-2-5-2-1-4-4-3.500 3-2 3-2 8-2-6-2-4-1.500-3z"
          />
        )}
      </svg>
      {row === 7 && (
        <span className="absolute top-[21px] left-[11px] flex h-[13px] w-[30px] items-center justify-center rounded-[3px] bg-[#2a333b] font-['Open_Sans'] text-[8.500px] leading-[13px] font-semibold text-[#f0f2f4]">
          <span className="inline-block scale-x-[0.92]">-5.1dB</span>
        </span>
      )}
    </div>
  );
}

function LaneClips({ row }: { row: number }) {
  if (row === 5) {
    return (
      <div className="absolute top-[1px] bottom-0 bg-[#24313a]" style={{ left: barX(113), width: 8 * BAR }}>
        <div className="flex h-[12px] items-center bg-[#43786c] pl-[1px] font-['Open_Sans'] text-[10px] text-[#e1ebe8]">
          <svg viewBox="0 0 9 8" className="h-[8px] w-[9px] shrink-0" fill="none" stroke="currentColor">
            <path d="M1 5.500h2v2H1zM3 5.500l3-3M6 .5h2v2H6z" />
          </svg>
          <Cond className="ml-[1px] w-[38px] scale-x-[0.74] tracking-[0.3px]">Mast..ume</Cond>
        </div>
        <svg viewBox="0 0 51 34" className="block h-[34px] w-full">
          <path d="M0 8l51 25V34H0z" fill="#33444b" />
          <path d="M0 8l51 25" stroke="#b7cbca" strokeWidth="1.300" />
        </svg>
      </div>
    );
  }
  if (row === 6 || row === 8) {
    return range(9, 121, 4).map((bar) => <AudioClip key={bar} bar={bar} bars={4} row={row} />);
  }
  if (row === 7) {
    return range(9, 121, 8).map((bar) => <AudioClip key={bar} bar={bar} bars={8} row={row} />);
  }
  if (row >= 10 && row <= 15) {
    const bars = row === 15 ? [17, 25, 57, 65, 97, 105] : patternBars;
    return (
      <>
        {row === 13 && (
          <div className="absolute top-px bottom-0 w-[12px] bg-[#24313a]/70" style={{ left: barX(7) + 0.5 }}>
            <div className="flex h-[12px] items-center justify-center bg-[#706a5b]">
              <AudioMark className="text-white" />
            </div>
            <svg viewBox="0 0 12 34" className="block h-[34px] w-[12px]">
              <path fill="#c2bcb2" d={envelope(12, 17, 1, (x) => (x < 8 ? 3 + noise(x) * 2 : 0.5))} />
            </svg>
          </div>
        )}
        {bars.map((bar) => (
          <PatternClip key={bar} bar={bar} row={row} label={patternNames[row](bar)} />
        ))}
      </>
    );
  }
  if (row === 16) {
    return [16.7, 56.7, 96.7].map((bar) => (
      <div key={bar} className="absolute top-px bottom-0 w-[25px] bg-[#27333c]" style={{ left: barX(bar) }}>
        <div className="flex h-[12px] items-center rounded-[2px] bg-[#564d6a] pl-[1px] font-['Open_Sans'] text-[10px] text-[#857b9b]">
          <AudioMark className="text-[#ecedf0]" />
          <Cond className="ml-[2px] scale-x-[0.84] tracking-[0.3px]">..h</Cond>
        </div>
        <svg viewBox="0 0 25 34" className="block h-[34px] w-[25px]" fill="#b3b6c4">
          <path d="M0 15.500l1.500-3.500L2.500 8l1 5 1.500 2.500 2 1H25v1H7l-2 1-1.500 2.500-1 5-1-4L0 18.500z" />
        </svg>
      </div>
    ));
  }
  if (row === 17) {
    return [17, 57, 97].flatMap((start) =>
      [0, 4, 8, 12].map((off) => (
        <div
          key={start + off}
          className="absolute top-px bottom-0 flex w-[6px] flex-col justify-between"
          style={{ left: barX(start + off) + 8 }}
        >
          <div className="flex h-[12px] justify-between bg-[#3d3746]">
            <span className="w-[1.500px] bg-[#8c5067]" />
            <span className="w-[1.500px] bg-[#8c5067]" />
          </div>
          <div className="flex flex-1 items-start gap-[2px] bg-[#26323a] pt-[13px]">
            <span className="h-[4px] w-[2px] bg-[#dfe0e2]" />
            <span className="h-[4px] w-[2px] bg-[#dfe0e2]" />
          </div>
        </div>
      )),
    );
  }
  return null;
}

function Minimap() {
  return (
    <div className="flex h-[17px] bg-[#50595f]">
      <span className="flex w-[16px] items-center justify-center text-[#2a3136]">
        <ChevronLeft className="size-[11px]" />
      </span>
      <svg viewBox="0 0 832 17" className="h-[17px] w-[832px] bg-[#566066]">
        <path stroke="#79858a" d="M40 2.500h694" strokeDasharray="16 2" />
        <path stroke="#6d787d" d="M40 5.500h694M38 10.500h12" />
        <path stroke="#4b6760" d="M50 7.500h644" />
        <path fill="#737e84" d="M99 9h195v5H99zM343 9h195v5H343zM587 9h97v5h-97z" />
        <path stroke="#566066" d="M147.500 8v7M245.500 8v7M391.500 8v7M489.500 8v7M635.500 8v7" />
        <path fill="#a9e656" d="M217 0h2v17h-2z" />
      </svg>
      <span className="flex w-[17px] items-center justify-center text-[#2a3136]">
        <ChevronRight className="size-[12px]" />
      </span>
      <span className="flex w-[17px] items-center justify-center bg-[#4b5258]">
        <span className="h-[4px] w-px bg-[#20272d]" />
      </span>
    </div>
  );
}

function Playlist() {
  return (
    <section className="flex h-[632px] overflow-hidden border-l border-[#262d33]">
      <div className="flex w-[92px] shrink-0 flex-col">
        <div className="grid h-[34px] shrink-0 grid-cols-[27px_20px_22px_23px] grid-rows-2 items-center justify-items-center bg-[#5a6168] text-[#e8ecef] [clip-path:polygon(0_100%,0_80%,7%_15%,11%_0,100%_0,100%_100%)]">
          <span />
          <Wave className="h-[12px] w-[16px]" />
          <svg viewBox="0 0 14 10" className="h-[9px] w-[13px] text-[#8b9196]" fill="none" stroke="currentColor">
            <circle cx="2" cy="8" r="1.500" />
            <path d="M3.500 7l7-4" />
            <circle cx="12" cy="2" r="1.500" />
          </svg>
          <Keys className="mr-[3px] h-[9px] w-[13px] text-[#92989d]" />
          <svg viewBox="0 0 8 8" className="size-[7px]" stroke="currentColor" strokeWidth="1.800">
            <path d="M4 0v8M0 4h8" />
          </svg>
          <Cross className="size-[8px]" />
          <svg viewBox="0 0 8 8" className="size-[7px] text-[#7c8288]" stroke="currentColor">
            <path d="M1 7l6-6" />
          </svg>
          <DoubleArrow className="h-[7px] w-[10px]" />
        </div>
        <div className="flex h-[7.300px] shrink-0 items-start">
          <div className="relative h-full w-[84px] overflow-hidden border-b border-[#3d444b] bg-[#474d54]">
            <span className="absolute -top-[3px] right-[4px]">
              <span className="block size-[7px] rounded-full bg-[#a9ec62] ring-1 ring-[#4c7c2c]" />
            </span>
          </div>
          <div className="h-full w-[8px] bg-[#303b43]" />
        </div>
        {tracks.map((t) => (
          <TrackHeader key={t.n} track={t} />
        ))}
      </div>
      <div className="flex min-w-0 flex-1 flex-col">
        <Minimap />
        <div className="flex min-h-0 flex-1">
          <div className="relative w-[864px] shrink-0 overflow-hidden">
            <div className="relative h-[17px] bg-[#1f292f] font-['Open_Sans'] text-[9.800px] leading-[18px] text-[#aab1b6]">
              {range(1, 134, 4).map((bar) => (
                <span key={bar} className="absolute top-0 origin-left scale-x-[0.86]" style={{ left: barX(bar) }}>
                  {bar}
                </span>
              ))}
              <span className="absolute top-0 left-[190px] h-[5px] w-[14px] bg-[#353f46] [clip-path:polygon(0_0,100%_0,50%_100%)]" />
              <span className="absolute top-[1px] left-[220px] h-[9px] w-[12px] bg-[#a8ef4e] [clip-path:polygon(0_0,100%_0,50%_100%)]" />
            </div>
            <div className="relative bg-[repeating-linear-gradient(90deg,#26343c_0_1px,transparent_1px_12.702px),repeating-linear-gradient(90deg,#35454f_0_25.404px,#2f3e48_25.404px_50.808px)]">
              <div className="relative h-[7.300px] border-b border-[#1f2c33]">
                {[9, 49, 89].flatMap((start) =>
                  range(start, start + 24, 4).map((bar) => (
                    <span
                      key={bar}
                      className="absolute top-[3px] h-[3.500px] w-[22.500px] bg-[#85ab8a]"
                      style={{ left: barX(bar) + 0.5 }}
                    />
                  )),
                )}
              </div>
              {tracks.map((t) => (
                <div key={t.n} className="relative h-[46.720px] border-b border-[#1f2c33]">
                  <LaneClips row={t.n} />
                </div>
              ))}
              <div className="absolute inset-y-0 left-[215px] w-[12px] border-r-2 border-[#84d343] bg-linear-to-r from-transparent to-[#5fae35]/70" />
              <svg
                viewBox="0 0 14 15"
                className="absolute top-[297px] left-[256px] h-[15px] w-[13px]"
                fill="#fff"
                stroke="#2b343b"
                strokeWidth="0.700"
              >
                <path d="M1 1l7 4 2-1 3 5v4l-3 1.500-5-1.500-2-4 1-1L0 2z" />
              </svg>
            </div>
          </div>
          <div className="w-[18px] border-l border-[#2c343a] bg-[#3b4147]">
            <div className="flex h-[17px] items-center justify-center bg-[#4b5157] text-[#23292e]">
              <ChevronUp className="size-[11px]" />
            </div>
            <div className="mt-[5px] h-[26px] bg-[#666b71]" />
          </div>
        </div>
      </div>
    </section>
  );
}

export default function App() {
  return (
    <div className="relative flex h-[720px] w-[1280px] flex-col overflow-hidden bg-[#3a4249] select-none">
      <header className="h-[68px] shrink-0 bg-[#596067]">
        <TopRow />
        <SecondRow />
      </header>
      <main className="flex min-h-0 flex-1">
        <Browser />
        <div className="w-[6px] shrink-0 bg-[#484d55]" />
        <div className="flex min-w-0 flex-1 flex-col">
          <TitleBar />
          <div className="flex min-h-0 flex-1">
            <Picker />
            <div className="w-[6px] shrink-0 bg-[#3f464e]" />
            <Playlist />
          </div>
        </div>
      </main>
      <div className="absolute top-[646px] -left-[35px] flex size-[67px] items-center justify-center rounded-full bg-black">
        <div className="flex size-[57px] flex-col items-end justify-center gap-[2px] rounded-full border border-[#34393d] pr-[22px]">
          <span className="size-[4px] rounded-full bg-white" />
          <span className="size-[4px] rounded-full bg-white" />
        </div>
      </div>
    </div>
  );
}
